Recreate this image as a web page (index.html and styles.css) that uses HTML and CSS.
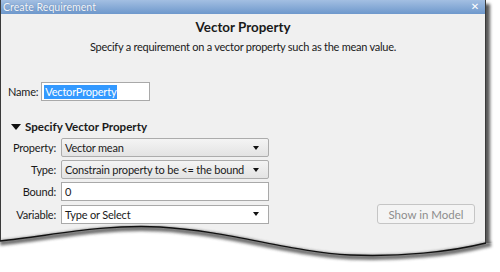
FILE: index.html
```html
<!DOCTYPE html>
<html>
<head>
<meta charset="utf-8">
<link rel="stylesheet" href="styles.css">
</head>
<body>
<div class="window">
  <div class="titlebar">
    <span class="title">Create Requirement</span>
    <span class="close">✕</span>
  </div>
  <div class="content">
    <div class="heading">Vector Property</div>
    <div class="subtitle">Specify a requirement on a vector property such as the mean value.</div>
    <div class="name-row">
      <span class="label">Name:</span>
      <div class="textbox name-box"><span class="sel">VectorProperty</span></div>
    </div>
    <div class="section">
      <span class="tri"></span>
      <span>Specify Vector Property</span>
    </div>
    <div class="form">
      <span class="flabel">Property:</span>
      <div class="combo"><span>Vector mean</span><span class="arrow"></span></div>
      <span></span>
      <span class="flabel">Type:</span>
      <div class="combo"><span>Constrain property to be &lt;= the bound</span><span class="arrow"></span></div>
      <span></span>
      <span class="flabel">Bound:</span>
      <div class="textbox"><span>0</span></div>
      <span></span>
      <span class="flabel">Variable:</span>
      <div class="textbox combo-white"><span>Type or Select</span><span class="arrow"></span></div>
      <button class="btn" disabled>Show in Model</button>
    </div>
  </div>
</div>
<svg class="tear" width="500" height="272" viewBox="0 0 500 272">
  <defs>
    <filter id="blur" x="-10%" y="-50%" width="120%" height="200%">
      <feGaussianBlur stdDeviation="1.6"/>
    </filter>
  </defs>
  <path d="M0,241 C50,236 100,224 160,227 C230,231 290,252 350,255 C400,257 450,252 486,243 L500,243 L500,272 L0,272 Z" fill="#ffffff"/>
  <path d="M0,243 C50,238 100,226 160,229 C230,233 290,254 350,257 C400,259 450,254 486,245 L491,244" fill="none" stroke="#555" stroke-width="5" filter="url(#blur)" opacity="0.85"/>
  <path d="M0,241 C50,236 100,224 160,227 C230,231 290,252 350,255 C400,257 450,252 486,243" fill="none" stroke="#111" stroke-width="1.4"/>
</svg>
</body>
</html>
```

FILE: styles.css
```css
html, body {
  margin: 0;
  padding: 0;
  background: #ffffff;
  width: 500px;
  height: 272px;
  overflow: hidden;
  position: relative;
}

.window {
  width: 484px;
  height: 262px;
  background: #f0f0f0;
  border-left: 1px solid #3a3a3a;
  border-right: 1px solid #3a3a3a;
  box-shadow: 4px 4px 3px rgba(0, 0, 0, 0.65);
  font-family: "Lato", "Liberation Sans", sans-serif;
  font-size: 11px;
  letter-spacing: -0.2px;
  color: #1a1a1a;
  display: flex;
  flex-direction: column;
  white-space: nowrap;
}

.titlebar {
  height: 14px;
  background: linear-gradient(#a3bfe2, #6e98cc);
  display: flex;
  align-items: center;
  justify-content: space-between;
  padding: 0 6px 0 2px;
  flex: none;
  overflow: hidden;
}

.title {
  color: #f4f7fb;
  font-size: 10.6px;
  letter-spacing: 0;
  line-height: 14px;
  text-shadow: 0 0 1px rgba(40, 70, 120, 0.5);
}

.close {
  color: #ffffff;
  font-size: 10px;
  line-height: 14px;
  font-weight: bold;
  font-family: "DejaVu Sans", sans-serif;
}

.content {
  display: flex;
  flex-direction: column;
  padding: 0;
}

.heading {
  text-align: center;
  font-weight: bold;
  font-size: 13.4px;
  letter-spacing: 0;
  line-height: 16px;
  margin-top: 5px;
}

.subtitle {
  text-align: center;
  line-height: 16px;
  margin-top: 4px;
  letter-spacing: -0.25px;
}

.name-row {
  display: flex;
  align-items: center;
  margin-top: 27px;
  padding-left: 7px;
  gap: 3px;
}

.textbox {
  height: 17px;
  background: #ffffff;
  border: 1px solid #a9a9a9;
  display: flex;
  align-items: center;
  padding: 0 3px;
  box-sizing: content-box;
}

.name-box {
  width: 103px;
  padding: 0 2px;
}

.sel {
  background: #3399ff;
  color: #ffffff;
  line-height: 14px;
  padding: 0 1px;
}

.section {
  display: flex;
  align-items: center;
  gap: 4px;
  margin-top: 18px;
  padding-left: 10px;
  font-weight: bold;
  font-size: 11.6px;
  letter-spacing: 0;
  line-height: 16px;
}

.tri {
  width: 0;
  height: 0;
  border-left: 5px solid transparent;
  border-right: 5px solid transparent;
  border-top: 6px solid #111;
}

.form {
  display: grid;
  grid-template-columns: 55px 208px 1fr;
  column-gap: 5px;
  row-gap: 3px;
  margin-top: 3px;
  align-items: center;
}

.flabel {
  text-align: right;
}

.form .textbox {
  padding: 0 3px;
  height: 17px;
}

.combo {
  height: 17px;
  border: 1px solid #acacac;
  border-radius: 2px;
  background: linear-gradient(#f4f4f4, #e3e3e3);
  display: flex;
  align-items: center;
  justify-content: space-between;
  padding: 0 3px;
}

.combo-white {
  justify-content: space-between;
}

.arrow {
  width: 0;
  height: 0;
  border-left: 3px solid transparent;
  border-right: 3px solid transparent;
  border-top: 4px solid #111;
  margin-right: 6px;
  flex: none;
}

.btn {
  justify-self: end;
  margin-right: 10px;
  width: 98px;
  height: 20px;
  border: 1px solid #c5c5c5;
  border-radius: 3px;
  background: #f4f4f4;
  color: #8d8d8d;
  font-family: "Lato", "Liberation Sans", sans-serif;
  font-size: 11.5px;
  padding: 0;
}

.tear {
  position: absolute;
  left: 0;
  top: 0;
}
```
